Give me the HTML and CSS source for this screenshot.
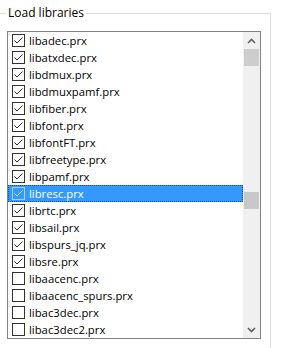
FILE: index.html
```html
<!DOCTYPE html>
<html lang="en">
<head>
    <meta charset="UTF-8">
    <meta name="viewport" content="width=device-width, initial-scale=1.0">
    <title>Load libraries</title>
    <link rel="stylesheet" href="styles.css">
</head>
<body>
    <fieldset class="group">
        <legend>Load libraries</legend>

        <!-- Список библиотек с чекбоксами -->
        <div class="listbox">
            <ul class="items" id="items"></ul>

            <div class="scrollbar">
                <div class="arrow">
                    <svg width="9" height="6" viewBox="0 0 9 6"><path d="M1 5 L4.5 1.5 L8 5" fill="none" stroke="#606060" stroke-width="1.6"/></svg>
                </div>
                <div class="thumb"></div>
                <div class="thumb thumb-ghost"></div>
                <div class="track"></div>
                <div class="arrow">
                    <svg width="9" height="6" viewBox="0 0 9 6"><path d="M1 1 L4.5 4.5 L8 1" fill="none" stroke="#606060" stroke-width="1.6"/></svg>
                </div>
            </div>
        </div>
    </fieldset>

    <script>
        const libs = [
            ['libadec.prx', true],
            ['libatxdec.prx', true],
            ['libdmux.prx', true],
            ['libdmuxpamf.prx', true],
            ['libfiber.prx', true],
            ['libfont.prx', true],
            ['libfontFT.prx', true],
            ['libfreetype.prx', true],
            ['libpamf.prx', true],
            ['libresc.prx', true],
            ['librtc.prx', true],
            ['libsail.prx', true],
            ['libspurs_jq.prx', true],
            ['libsre.prx', true],
            ['libaacenc.prx', false],
            ['libaacenc_spurs.prx', false],
            ['libac3dec.prx', false],
            ['libac3dec2.prx', false]
        ];
        const selected = 'libresc.prx';

        const check = '<svg width="13" height="13" viewBox="0 0 13 13"><path d="M2.5 6.5 L5 9 L10.5 3.5" fill="none" stroke="currentColor" stroke-width="1"/></svg>';

        const list = document.getElementById('items');
        for (const [name, on] of libs) {
            const li = document.createElement('li');
            li.className = 'item' + (name === selected ? ' selected' : '');
            li.innerHTML = `<span class="box">${on ? check : ''}</span><span class="name">${name}</span>`;
            list.appendChild(li);
        }
    </script>
</body>
</html>
```

FILE: styles.css
```css
body {
    margin: 0;
    height: 348px;
    background-color: #fff;
    font-family: "Open Sans", "Noto Sans", sans-serif;
    font-size: 11.3px;
    color: #000;
    overflow: hidden;
}
.group {
    margin: 5px 0 0 -1px;
    padding: 0 0 0 7px;
    width: 263px;
    height: 342px;
    border: 1px solid #dcdcdc;
}
.group legend {
    padding: 0 2px;
    margin-left: -1px;
    line-height: 16px;
    font-size: 12px;
    color: #000;
}
.listbox {
    display: flex;
    margin-top: 10px;
    width: 252px;
    height: 306px;
    border: 1px solid #828282;
}
.items {
    flex: 1;
    list-style: none;
    margin: 0;
    padding: 0;
}
.item {
    display: flex;
    align-items: center;
    gap: 4px;
    height: 17px;
    padding-left: 4px;
    line-height: 17px;
    white-space: nowrap;
}
.box {
    width: 11px;
    height: 11px;
    border: 1px solid #333;
    color: #333;
    flex-shrink: 0;
    position: relative;
}
.box svg {
    position: absolute;
    left: -1px;
    top: -1px;
}
.item.selected {
    background-color: #3399ff;
    color: #fff;
    outline: 1px dotted #1a4f85;
    outline-offset: -1px;
}
.item.selected .box {
    border-color: #a9d1fb;
    color: #d8ebff;
}
.scrollbar {
    width: 17px;
    display: flex;
    flex-direction: column;
    background-color: #f0f0f0;
}
.arrow {
    height: 17px;
    display: flex;
    align-items: center;
    justify-content: center;
}
.thumb {
    height: 17px;
    margin: 0 1px;
    background-color: #cdcdcd;
}
.thumb-ghost {
    margin-top: 126px;
    background-color: #c8c8c8;
}
.track {
    flex: 1;
}
```
